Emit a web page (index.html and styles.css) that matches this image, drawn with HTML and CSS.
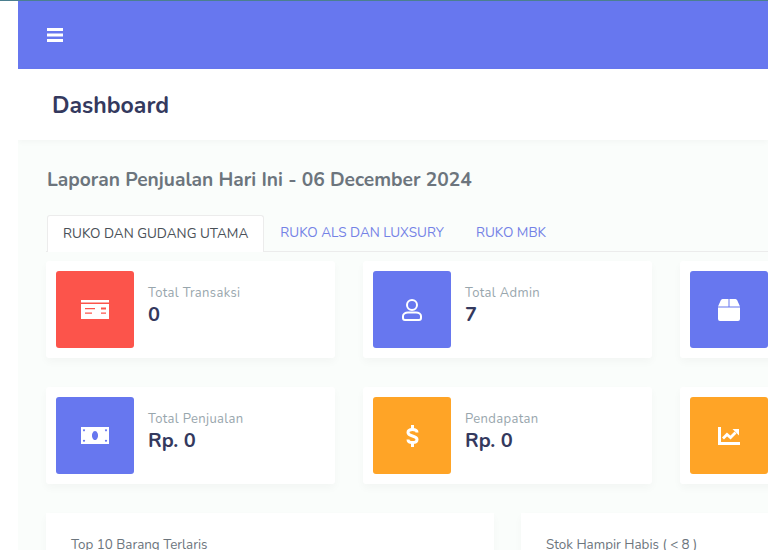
FILE: index.html
```html
<!DOCTYPE html>
<html lang="id">
<head>
  <meta charset="UTF-8">
  <title>Dashboard</title>
  <link rel="stylesheet" href="styles.css">
</head>
<body>
<div class="app">
  <div class="sidebar"></div>
  <div class="main">
    <nav class="navbar">
      <svg class="menu-icon" viewBox="0 0 16 14"><path d="M0 0h16v3H0zM0 5.500h16v3H0zM0 11h16v3H0z" fill="#fff"/></svg>
    </nav>
    <div class="section-header"><h1>Dashboard</h1></div>
    <div class="content">
      <h2 class="section-title">Laporan Penjualan Hari Ini - 06 December 2024</h2>
      <ul class="tabs">
        <li class="tab active">RUKO DAN GUDANG UTAMA</li>
        <li class="tab">RUKO ALS DAN LUXSURY</li>
        <li class="tab">RUKO MBK</li>
      </ul>

      <div class="stats">
        <div class="card">
          <div class="card-icon bg-red">
            <svg class="icon-card" viewBox="0 0 28 19"><path fill-rule="evenodd" d="M0 0h28v19H0zM0 2.500v1.500h28V2.500zM4 8v1.200h10V8zM20 7.500v2h5v-2zM4 12.500v1.200h7v-1.200zM20 12.500v1.200h5v-1.200z" fill="#fff"/></svg>
          </div>
          <div><div class="card-label">Total Transaksi</div><div class="card-value">0</div></div>
        </div>
        <div class="card">
          <div class="card-icon bg-blue">
            <svg class="icon-user" viewBox="0 0 20 22"><circle cx="10" cy="6" r="5" fill="none" stroke="#fff" stroke-width="2"/><path d="M6 13.500h8a5 3.500 0 0 1 5 3.500v2a2 2 0 0 1-2 2H3a2 2 0 0 1-2-2v-2a5 3.500 0 0 1 5-3.500z" fill="none" stroke="#fff" stroke-width="2"/></svg>
          </div>
          <div><div class="card-label">Total Admin</div><div class="card-value">7</div></div>
        </div>
        <div class="card">
          <div class="card-icon bg-blue">
            <svg class="icon-box" viewBox="0 0 22 22"><path d="M0 7.500l2.800-6.200A2 2 0 0 1 4.500 0h6v7.500zM11.500 0h6a2 2 0 0 1 1.700 1.300L22 7.500H11.500zM0 8.500h22V20a2 2 0 0 1-2 2H2a2 2 0 0 1-2-2z" fill="#fff"/></svg>
          </div>
        </div>
        <div class="card">
          <div class="card-icon bg-blue">
            <svg class="icon-money" viewBox="0 0 28 17"><path fill-rule="evenodd" d="M0 0h28v17H0zM14 4a3 4.500 0 1 0 .01 0zM3 2.200a1 1 0 1 0 .01 0zM25 2.200a1 1 0 1 0 .01 0zM3 12.800a1 1 0 1 0 .01 0zM25 12.800a1 1 0 1 0 .01 0z" fill="#fff"/></svg>
          </div>
          <div><div class="card-label">Total Penjualan</div><div class="card-value">Rp. 0</div></div>
        </div>
        <div class="card">
          <div class="card-icon bg-orange">
            <svg class="icon-dollar" viewBox="0 0 13 22"><path d="M11 7.500C11 5.500 9 4.500 6.500 4.500S2 5.500 2 7.500c0 4.500 9 2.500 9 7 0 2-2 3-4.500 3S2 16.500 2 14.500" fill="none" stroke="#fff" stroke-width="3"/><path d="M5 0h3v4H5zM5 18h3v4H5z" fill="#fff"/></svg>
          </div>
          <div><div class="card-label">Pendapatan</div><div class="card-value">Rp. 0</div></div>
        </div>
        <div class="card">
          <div class="card-icon bg-orange">
            <svg class="icon-chart" viewBox="0 0 22 18"><path d="M1.500 0v16.500H22" fill="none" stroke="#fff" stroke-width="3"/><path d="M5 11.500l4-4 3.500 3 5-5" fill="none" stroke="#fff" stroke-width="2.800"/><path d="M14.500 2H21v6.500z" fill="#fff"/></svg>
          </div>
        </div>
      </div>

      <div class="panels">
        <div class="panel"><h4>Top 10 Barang Terlaris</h4></div>
        <div class="panel"><h4>Stok Hampir Habis ( &lt; 8 )</h4></div>
      </div>
    </div>
  </div>
</div>
</body>
</html>
```

FILE: styles.css
```css
html, body {
    margin: 0;
    height: 550px;
    overflow: hidden;
}

body {
    background-color: #fff;
    font-family: "Nunito", "Lato", "Noto Sans", sans-serif;
    color: #6c757d;
    border-top: 1px solid #4b7f8f;
    box-sizing: border-box;
}

.app {
    display: flex;
}

.sidebar {
    width: 18px;
    flex: none;
}

.main {
    flex: 1;
    min-width: 0;
    background-color: #fafdfb;
    height: 549px;
    overflow: hidden;
}

.navbar {
    height: 68px;
    background-color: #6777ef;
    display: flex;
    align-items: center;
    padding-left: 29px;
}

.menu-icon {
    width: 16px;
    height: 14px;
}

.section-header {
    height: 71px;
    background-color: #fff;
    box-shadow: 0 2px 6px rgba(0, 0, 0, 0.03);
    display: flex;
    align-items: center;
    padding: 2px 0 0 34px;
    box-sizing: border-box;
}

.section-header h1 {
    margin: 0;
    font-size: 23px;
    font-weight: 700;
    color: #34395e;
}

.content {
    padding: 28px 0 0 28px;
}

.section-title {
    margin: 0 0 0 1px;
    font-size: 19.200px;
    line-height: 24px;
    font-weight: 700;
    color: #6c757d;
}

.tabs {
    list-style: none;
    margin: 23px 0 0;
    padding: 0 0 0 1px;
    display: flex;
    height: 37px;
    box-sizing: border-box;
    border-bottom: 1px solid #ececec;
    font-size: 13.550px;
}

.tab {
    padding: 0 16px;
    line-height: 35px;
    color: #7482e6;
}

.tab.active {
    color: #495057;
    background-color: #fff;
    border: 1px solid #ececec;
    border-bottom: 0;
    height: 36px;
    padding: 0 15px;
    border-radius: 3px 3px 0 0;
}

.stats {
    display: grid;
    grid-template-columns: repeat(3, 289px);
    column-gap: 28px;
    row-gap: 29px;
    margin-top: 9px;
}

.card {
    height: 97px;
    background-color: #fff;
    border-radius: 3px;
    box-shadow: 0 4px 8px rgba(0, 0, 0, 0.03);
    display: flex;
    align-items: flex-start;
    gap: 14px;
    padding: 10px;
    box-sizing: border-box;
}

.card-icon {
    width: 78px;
    height: 77px;
    flex: none;
    border-radius: 3px;
    display: flex;
    align-items: center;
    justify-content: center;
}

.icon-card { width: 28px; height: 19px; }
.icon-user { width: 20px; height: 22px; }
.icon-box { width: 22px; height: 22px; }
.icon-money { width: 28px; height: 17px; }
.icon-dollar { width: 13px; height: 22px; }
.icon-chart { width: 22px; height: 18px; }

.bg-red { background-color: #fc544b; }
.bg-blue { background-color: #6777ef; }
.bg-orange { background-color: #ffa426; }

.card-label {
    margin-top: 14px;
    font-size: 13px;
    line-height: 16px;
    letter-spacing: .35px;
    color: #98a6ad;
}

.card-value {
    margin-top: 2px;
    font-size: 20px;
    line-height: 24px;
    font-weight: 700;
    color: #34395e;
}

.panels {
    display: flex;
    gap: 27.500px;
    margin-top: 29px;
}

.panel {
    width: 447.500px;
    height: 200px;
    flex: none;
    background-color: #fff;
    box-shadow: 0 4px 8px rgba(0, 0, 0, 0.03);
    padding: 25px;
    box-sizing: border-box;
}

.panel h4 {
    margin: 0;
    font-size: 13.400px;
    line-height: 14px;
    font-weight: 400;
    color: #6c757d;
}
```
